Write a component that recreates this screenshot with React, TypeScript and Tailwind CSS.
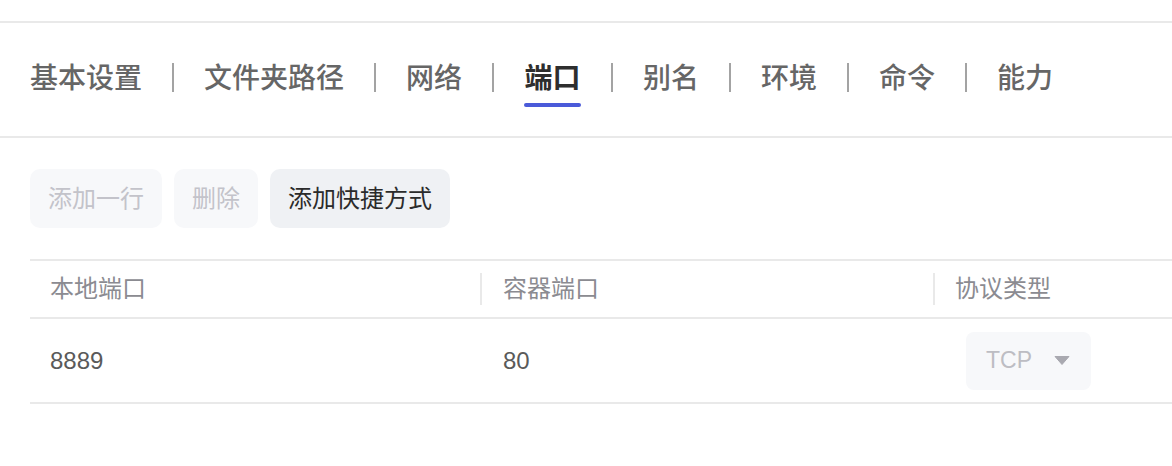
import React from "react";

const tabs = ["基本设置", "文件夹路径", "网络", "端口", "别名", "环境", "命令", "能力"];
const ACTIVE = 3;

export default function App() {
  return (
    <div
      className="w-[1172px] h-[466px] bg-white overflow-hidden"
      style={{ fontFamily: '"Liberation Sans", "Noto Sans CJK SC", sans-serif' }}
    >
      <div className="h-[21px]" />
      {/* Tabs */}
      <div className="border-t-2 border-b-2 border-[#e9e9e9] h-[117px] pt-[36px] pl-[30px] flex items-start gap-[30px]">
        {tabs.map((t, i) => (
          <React.Fragment key={t}>
            {i > 0 && (
              <div className="h-[36px] flex items-center">
                <div className="w-[2px] h-[29px] bg-[#a3a3a3]" />
              </div>
            )}
            <div className="flex flex-col items-center">
              <div
                className={
                  "h-[40px] leading-[40px] text-[28px] whitespace-nowrap " +
                  (i === ACTIVE ? "text-[#2e2e2e] font-semibold" : "text-[#666666] font-medium")
                }
              >
                {t}
              </div>
              {i === ACTIVE && <div className="mt-[4px] h-[4px] w-[57px] rounded-full bg-[#4a5ad9]" />}
            </div>
          </React.Fragment>
        ))}
      </div>

      {/* Buttons */}
      <div className="mt-[31px] pl-[30px] flex gap-[12px]">
        <div className="h-[59px] px-[18px] rounded-[10px] bg-[#f7f8fa] text-[#c3c3ca] text-[24px] flex items-center">
          添加一行
        </div>
        <div className="h-[59px] px-[18px] rounded-[10px] bg-[#f7f8fa] text-[#c3c3ca] text-[24px] flex items-center">
          删除
        </div>
        <div className="h-[59px] px-[18px] rounded-[10px] bg-[#eff1f4] text-[#2b2b2b] text-[24px] flex items-center">
          添加快捷方式
        </div>
      </div>

      {/* Table */}
      <div className="mt-[31px] ml-[30px] border-t-2 border-[#e9e9e9]">
        <div className="h-[58px] border-b-2 border-[#e9e9e9] flex items-center text-[24px] text-[#8b8b91]">
          <div className="w-[450px] pl-[20px]">本地端口</div>
          <div className="w-[2px] h-[32px] bg-[#e9e9e9]" />
          <div className="w-[451px] pl-[21px]">容器端口</div>
          <div className="w-[2px] h-[32px] bg-[#e9e9e9]" />
          <div className="flex-1 pl-[20px]">协议类型</div>
        </div>
        <div className="h-[85px] border-b-2 border-[#e9e9e9] flex items-center text-[24px] text-[#5a5a5a]">
          <div className="w-[452px] pl-[20px]">8889</div>
          <div className="w-[453px] pl-[21px]">80</div>
          <div className="flex-1 pl-[31px]">
            <div className="w-[125px] h-[58px] rounded-[8px] bg-[#f7f8fa] flex items-center justify-between pl-[20px] pr-[21px]">
              <span className="text-[23px] text-[#bdbdc3]">TCP</span>
              <svg width="16" height="9" viewBox="0 0 16 9">
                <path d="M1 0.5 H15 L8 8.5 Z" fill="#a9a9b0" stroke="#a9a9b0" strokeLinejoin="round" />
              </svg>
            </div>
          </div>
        </div>
      </div>
    </div>
  );
}
